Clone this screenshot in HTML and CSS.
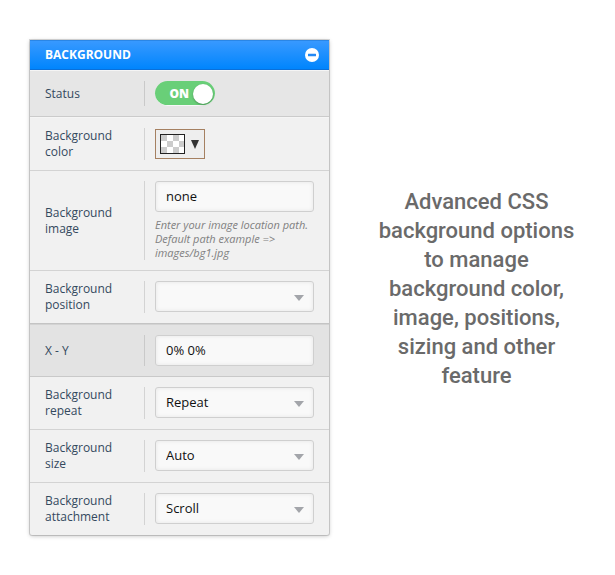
FILE: index.html
```html
<!DOCTYPE html>
<html lang="en">
<head>
<meta charset="utf-8">
<meta name="viewport" content="width=device-width, initial-scale=1">
<title>Background settings</title>
<link rel="stylesheet" href="styles.css">
</head>
<body>
<main class="page">
  <form class="panel">
    <header class="panel-header">
      <h2 class="panel-title">BACKGROUND</h2>
      <button class="collapse" type="button" aria-label="Collapse">
        <svg viewBox="0 0 14 14" width="14" height="14" aria-hidden="true">
          <circle cx="7" cy="7" r="7" fill="#fff"/>
          <rect x="3" y="5.7" width="8" height="2.6" rx=".4" fill="#2389f5"/>
        </svg>
      </button>
    </header>

    <div class="row row-first">
      <label class="label" for="status">Status</label>
      <div class="field">
        <label class="toggle"><span>ON</span><input class="knob" id="status" type="checkbox" checked></label>
      </div>
    </div>

    <div class="row row-color">
      <label class="label" for="color">Background color</label>
      <div class="field">
        <button class="picker" id="color" type="button">
          <span class="swatch"></span>
          <svg viewBox="0 0 8 9" width="8" height="9" aria-hidden="true"><path d="M0 0h8L4 9z" fill="#333"/></svg>
        </button>
      </div>
    </div>

    <div class="row">
      <label class="label" for="image">Background image</label>
      <div class="field">
        <input class="control" id="image" type="text" value="none">
        <p class="help">Enter your image location path. Default path example =&gt; images/bg1.jpg</p>
      </div>
    </div>

    <div class="row">
      <label class="label" for="position">Background position</label>
      <div class="field select">
        <select class="control" id="position"><option></option></select>
        <svg class="arrow" viewBox="0 0 10 6" aria-hidden="true"><path d="M0 0h10L5 6z"/></svg>
      </div>
    </div>

    <div class="row row-nested">
      <label class="label" for="xy">X - Y</label>
      <div class="field">
        <input class="control" id="xy" type="text" value="0% 0%">
      </div>
    </div>

    <div class="row">
      <label class="label" for="repeat">Background repeat</label>
      <div class="field select">
        <select class="control" id="repeat"><option>Repeat</option></select>
        <svg class="arrow" viewBox="0 0 10 6" aria-hidden="true"><path d="M0 0h10L5 6z"/></svg>
      </div>
    </div>

    <div class="row">
      <label class="label" for="size">Background size</label>
      <div class="field select">
        <select class="control" id="size"><option>Auto</option></select>
        <svg class="arrow" viewBox="0 0 10 6" aria-hidden="true"><path d="M0 0h10L5 6z"/></svg>
      </div>
    </div>

    <div class="row">
      <label class="label" for="attachment">Background attachment</label>
      <div class="field select">
        <select class="control" id="attachment"><option>Scroll</option></select>
        <svg class="arrow" viewBox="0 0 10 6" aria-hidden="true"><path d="M0 0h10L5 6z"/></svg>
      </div>
    </div>
  </form>

  <p class="caption">Advanced CSS background options to manage background color, image, positions, sizing and other feature</p>
</main>
</body>
</html>
```

FILE: styles.css
```css
* {
  box-sizing: border-box;
}

body {
  margin: 0;
  background: #fff;
  font-family: "Open Sans", "Noto Sans", sans-serif;
}

.page {
  display: grid;
  grid-template-columns: minmax(0, 13fr) minmax(0, 9fr);
  column-gap: 44px;
  align-items: center;
  padding: 40px 35px 40px 30px;
}

.panel {
  background: #f1f1f1;
  border-radius: 0 0 2px 2px;
  box-shadow: 0 0 0 1px rgba(0, 0, 0, 0.14), 0 1px 4px rgba(0, 0, 0, 0.25);
}

.panel-header {
  display: flex;
  align-items: center;
  justify-content: space-between;
  height: 30px;
  padding: 0 10px 0 15px;
  background: linear-gradient(#3899ff, #0085fd);
  border: solid #0a70da;
  border-width: 1px 0;
  border-top-color: #2a86e6;
}

.panel-title {
  margin: 0;
  color: #fff;
  font-size: 12px;
  font-weight: 700;
  line-height: 16px;
}

.collapse {
  display: flex;
  padding: 0;
  border: 0;
  background: none;
}

.row {
  display: grid;
  grid-template-columns: 100px minmax(0, 1fr);
  padding: 10px 15px;
  border-bottom: 1px solid #d3d3d3;
}

.row:last-child {
  border-bottom: 0;
}

.row-first {
  background: #e6e6e6;
  border-top: 1px solid #f5f5f5;
  border-bottom-color: #cbcbcb;
}

.row-color {
  border-top: 1px solid #f5f5f5;
}

.row-nested {
  background: #e3e3e3;
  border-top: 1px solid #d3d3d3;
  border-bottom-color: #c9c9c9;
  box-shadow: 0 -1px 0 #c4c4c4;
}

.label {
  display: flex;
  align-items: center;
  padding-right: 20px;
  border-right: 1px solid #d3d3d3;
  color: #34495e;
  font-size: 12px;
  line-height: 16px;
}

.row-first .label,
.row-nested .label {
  border-right-color: #c9c9c9;
}

.field {
  padding-left: 10px;
}

.control {
  display: block;
  width: 100%;
  height: 31px;
  margin: 0;
  padding: 0 10px 2px;
  appearance: none;
  border: 1px solid #cfcfcf;
  border-radius: 3px;
  background: #f9f9f9;
  box-shadow: inset 0 0 4px rgba(0, 0, 0, 0.08);
  color: #111;
  font: 13px/18px "Open Sans", "Noto Sans", sans-serif;
}

.select {
  position: relative;
  padding-bottom: 1px;
}

.arrow {
  position: absolute;
  right: 10px;
  top: 14px;
  width: 10px;
  height: 6px;
  fill: #a3a5aa;
  pointer-events: none;
}

.help {
  margin: 6px 0 0;
  color: #808080;
  font-size: 11px;
  font-style: italic;
  line-height: 14px;
}

.toggle {
  display: flex;
  align-items: center;
  justify-content: flex-end;
  gap: 4px;
  width: 60px;
  height: 25px;
  padding: 1px 2px 0;
  border-bottom: 1px solid #f7f7f7;
  border-radius: 13px;
  background: #69cf78;
  color: #fff;
  font-size: 12px;
  font-weight: 800;
  line-height: 16px;
}

.knob {
  width: 20px;
  height: 20px;
  margin: 0;
  appearance: none;
  border-radius: 50%;
  background: #fff;
  box-shadow: 0 1px 2px rgba(0, 0, 0, 0.3);
}

.picker {
  display: flex;
  align-items: center;
  gap: 6px;
  width: 50px;
  height: 30px;
  margin: 1px 0;
  padding: 0 4px;
  border: 1px solid #a58061;
  background: #eee;
}

.swatch {
  width: 25px;
  height: 20px;
  border: 1px solid #222;
  background: repeating-conic-gradient(#ccc 0 25%, #fff 0 50%) 6px 0 / 12px 12px;
}

.caption {
  margin: 0;
  padding-top: 2px;
  color: #6a6a6a;
  font: 500 22px/29px Roboto, sans-serif;
  text-align: center;
}
```
